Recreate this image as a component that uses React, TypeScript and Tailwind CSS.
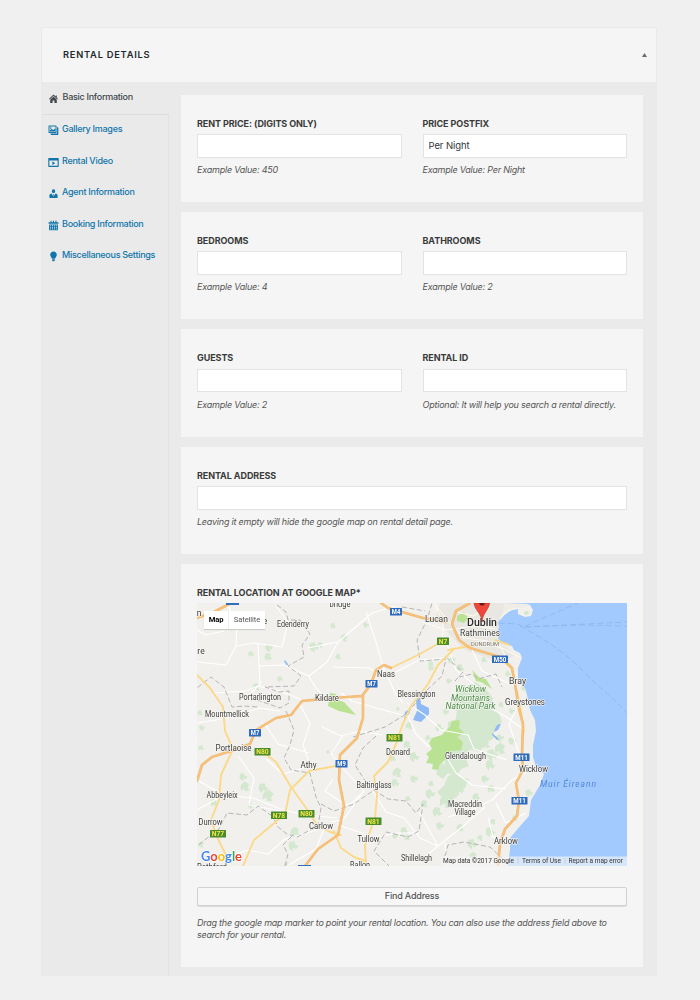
import React from "react";

const tabs = [
  { label: "Gallery Images", icon: "gallery" },
  { label: "Rental Video", icon: "video" },
  { label: "Agent Information", icon: "agent" },
  { label: "Booking Information", icon: "calendar" },
  { label: "Miscellaneous Settings", icon: "bulb" },
];

function Icon({ name }: { name: string }) {
  return (
    <svg viewBox="0 0 20 20" className="mt-[3px] h-[11px] w-[11px] shrink-0" fill="currentColor" fillRule="evenodd">
      {name === "home" && (
        <path d="M16 8.500l2 2-1.200 1.200L10 5 3.200 11.700 2 10.500 10 2.500l4 4v-2h2zM10 6.300l6 6V18h-4.300v-4.500H8.300V18H4v-5.700z" />
      )}
      {name === "gallery" && (
        <path d="M15.500 2v11.500c0 .55-.45 1-1 1H2c-.55 0-1-.45-1-1V2c0-.55.45-1 1-1h12.500c.55 0 1 .45 1 1zM13.700 2.800h-11v9.900h11zM5 7a1.500 1.500 0 1 0 0-3 1.500 1.500 0 0 0 0 3zM13 12V6.200L9.500 9 6.500 7.200 3.400 9.500V12zM16.500 4h1.300c.55 0 1 .45 1 1v12c0 .55-.45 1-1 1h-12c-.55 0-1-.45-1-1v-1.500h11.700z" />
      )}
      {name === "video" && (
        <path d="M1.500 2h17c.55 0 1 .45 1 1v14c0 .55-.45 1-1 1h-17c-.55 0-1-.45-1-1V3c0-.55.45-1 1-1zm1 4.500V16h15V6.500zM8 7.800l5 3.400-5 3.400z" />
      )}
      {name === "agent" && (
        <path d="M10 2.300a3.100 3.400 0 1 1 0 6.900 3.100 3.400 0 0 1 0-6.900zM6.500 10.200L10 16l-.9-3.800.9-1.200.9 1.200L10 16l3.500-5.800c2.300.5 4 1.700 4 3.300V17c0 .5-.4 1-1 1h-13c-.6 0-1-.5-1-1v-3.500c0-1.600 1.700-2.800 4-3.300z" />
      )}
      {name === "calendar" && (
        <path d="M4.500 1.500h2V4h2.500V1.500h2V4h2.500V1.500h2V4H19v3H1V4h3.500zM2 8h16v10.500H2zm2 1.500v1.800h1.700V9.500zm3.400 0v1.800h1.800V9.500zm3.500 0v1.800h1.700V9.500zm3.400 0v1.800h1.700V9.500zM4 12.500v1.800h1.700v-1.800zm3.400 0v1.800h1.800v-1.800zm3.500 0v1.800h1.700v-1.800zm3.400 0v1.800h1.700v-1.800zM4 15.500v1.800h1.700v-1.800zm3.400 0v1.800h1.800v-1.800zm3.500 0v1.800h1.700v-1.800zm3.400 0v1.800h1.700v-1.800z" />
      )}
      {name === "bulb" && (
        <path d="M10 1c3.300 0 6 2.700 6 6 0 2.800-2.200 4.600-3.300 7H7.300C6.200 11.600 4 9.800 4 7c0-3.300 2.700-6 6-6zM7.500 15h5v2l-1.200 1.500H8.700L7.500 17z" />
      )}
    </svg>
  );
}

function Label({ children }: { children: React.ReactNode }) {
  return <div className="h-[12px] text-[9px] leading-[12px] font-bold tracking-[-0.08px] whitespace-nowrap text-[#3a3a3a]">{children}</div>;
}

function Field({ label, value = "", hint }: { label: string; value?: string; hint: string }) {
  return (
    <div className="flex min-w-0 flex-1 flex-col">
      <Label>{label}</Label>
      <input
        defaultValue={value}
        aria-label={label}
        className="mt-[4.500px] h-[23.500px] w-full border border-[#e3e3e3] bg-white px-[5px] text-[9.500px] tracking-[-0.1px] text-[#32373c] outline-none"
      />
      <div className="mt-[6.500px] text-[9px] leading-[12px] tracking-[-0.22px] whitespace-nowrap text-[#555] italic">{hint}</div>
    </div>
  );
}

function Card({ children }: { children: React.ReactNode }) {
  return <section className="flex h-[107.400px] gap-[21px] bg-[#f5f5f5] px-4 pt-[23px]">{children}</section>;
}

type Town = [string, number, number, number];
const towns: Town[] = [
  ["Edenderry", 293, 627, 32],
  ["Portarlington", 260, 700, 42],
  ["Mountmellick", 227, 717, 44],
  ["Kildare", 327, 701, 24],
  ["Naas", 386, 676.5, 18],
  ["Lucan", 436.5, 622, 23],
  ["Rathmines", 480, 636, 40],
  ["Blessington", 416.5, 696.5, 38],
  ["Bray", 517.5, 684, 17],
  ["Greystones", 525, 705, 40],
  ["Portlaoise", 233.5, 751, 36],
  ["Athy", 308.5, 767.5, 16],
  ["Abbeyleix", 222, 797.5, 31],
  ["Durrow", 210.5, 825, 24],
  ["Carlow", 321, 829, 24],
  ["Donard", 398, 755, 24],
  ["Baltinglass", 374, 787.5, 35],
  ["Tullow", 368.5, 842, 22],
  ["Ballon", 360, 867.5, 20],
  ["Shillelagh", 416.5, 860.5, 31],
  ["Glendalough", 465.5, 759, 41],
  ["Macreddin", 465, 807, 34],
  ["Village", 465, 814.5, 21],
  ["Wicklow", 533.5, 771.5, 29],
  ["Arklow", 506, 843.5, 24],
];

type Shield = [string, number, number];
const shields: Shield[] = [
  ["M4", 396, 611.5], ["M7", 371.5, 683.5], ["M7", 255, 732.5], ["M9", 341.5, 763.5],
  ["M50", 500, 659], ["M11", 521.5, 757], ["M11", 519.5, 800.5],
  ["N7", 443, 641], ["N81", 394.5, 737.5], ["N80", 262.5, 751.5], ["N78", 279, 815],
  ["N80", 306.5, 813.5], ["N77", 218, 833.5], ["N81", 373.5, 821],
];

const greens: [number, number, number][] = [
  [269, 648, 4], [268, 657, 4], [314, 647, 5], [320, 645, 3], [251, 654, 3], [344, 638, 4], [333, 626, 3],
  [366, 625, 3], [338, 657, 3], [280, 679, 3], [256, 687, 4], [328, 752, 2], [202, 728, 3], [200, 713, 3],
  [243, 777, 4], [245, 787, 5], [263, 788, 5], [268, 796, 6], [214, 803, 4], [251, 806, 3], [295, 832, 5],
  [293, 846, 5], [201, 845, 3], [201, 748, 3], [287, 865, 3], [407, 745, 4], [414, 757, 5], [397, 773, 5],
  [395, 783, 4], [414, 779, 4], [431, 784, 3], [430, 794, 5], [424, 804, 4], [408, 799, 3], [447, 801, 8],
  [437, 812, 5], [440, 826, 4], [460, 828, 4], [472, 844, 5], [473, 856, 4], [404, 831, 4], [395, 836, 3],
  [407, 838, 3], [492, 755, 6], [500, 749, 6], [490, 765, 5], [512, 741, 4], [491, 789, 4], [529, 793, 4],
  [493, 822, 3], [490, 832, 5], [515, 818, 3], [488, 720, 4], [512, 711, 3], [501, 705, 3], [508, 674, 3],
  [452, 661, 4], [460, 668, 4], [449, 681, 3], [431, 664, 3], [431, 668, 3], [409, 726, 4], [439, 728, 4],
  [444, 742, 3], [476, 797, 4], [485, 779, 4], [417, 717, 3], [398, 709, 2], [434, 742, 3], [393, 759, 3],
  [446, 712, 3], [440, 762, 4], [459, 790, 5], [480, 838, 3], [484, 660, 3], [500, 738, 4], [486, 745, 4],
  [453, 795, 5], [443, 793, 4], [428, 738, 3], [524, 688, 3],
];

const majorRoads =
  "M197 618L214 612 231 603M197 781L202 765 212 757 234 750 250 744 256 730 276 718 291 715 302 701 333 698 362 696 371 684 376 670 384 665 391 668M363 696V718L357 738 340 755 339 780 344 806 338 835 318 849 305 866M381 603L388 608 423 618 446 622M470 603L456 611 452 624 459 640 470 648 500 657 512 668 516 690 519 709 523 724 522 755 523 770 516 783 519 801 517 816 505 829 500 844 498 866";

function MapView() {
  return (
    <svg viewBox="197 603 430 263" className="block h-[263px] w-[430px]" fontFamily="Roboto, 'Liberation Sans', sans-serif">
      <rect x="197" y="603" width="430" height="263" fill="#f2f0ed" />
      <path d="M440 603H506L500 622 499 642 516 655 500 662 465 650 447 632 436 615z" fill="#e5e2dc" opacity=".7" />
      <g fill="#cfe6c9" opacity=".85">
        {greens.map(([x, y, r], i) => (
          <path key={i} transform={`translate(${x} ${y}) rotate(${(i * 47) % 80}) scale(${r / 5})`} d="M-5-2L-1-5 2-2 5-3 4 2 1 1 2 5-2 4-4 2z" />
        ))}
        <path d="M454 700l3-9 10-5 8-4 10 6 8 10-2 6 8 9 3 9-7 6-2 11-8 4-5 9-9-2-5-8-6-4 4-9-9-6 2-12-5-4z" />
        <path d="M448 722l10-3 8 11 10 3-3 14-9 8 5 11-8 3-5 8-8-4-5 6-7-5 3-8 6-2-1-13 7-5-4-7zM448 776l7-3 5 4 9 2-4 9-9 4-4 7-9-1-6-6 7-6z" />
      </g>
      <path d="M432 738l10-3 3-4 5-4 2-6 8-1-1 8 5 5-7 4 6 5-2 8-8 1-7 2-1 7-5 4-2 6-6-1 1-5-7-1 3-6-3-3 6-5-3-6zM472 670l8 8 6 1 6 10-11-7-5-1zM457 616l7-4 4 6-4 5-7-2zM330 693l6 1-1 5 9 3 12 13-17-4-11-5z" fill="#b9e392" />
      <path d="M504 603H627V866H508L510 850V838L521 825 529 816 531 800 540 785 544 774 536 767 533 757V745L536 731 535 720 530 710 527 695 525 688 518 680V668L522 658 520 653 514 650 512 646 505 644 499 640 497 633 499 627 498 622 503 616 511 610 518 609 518 614 525 617 531 616 533 610 530 605 513 606z" fill="#a2caff" />
      <path d="M504 603L530 604 518 609 508 609 503 614z" fill="#efede6" />
      <path d="M500 619Q507 609 518 608" fill="none" stroke="#f6f3eb" strokeWidth="1.500" />
      <path d="M524 612l4-1 1 3-4 1z" fill="#cfe6c9" />
      <g fill="none" stroke="#8bb5ec" strokeWidth=".8" strokeDasharray="6 3">
        <path d="M499 623L517 624 525 627 627 622M525 626L578 603M520 626C548 641 568 655 584 672S613 697 627 713M525 627L580 625 627 626" />
      </g>
      <path d="M416 700l4-3 1 7 8 4 0 6-8 8-8-2 4-9zM405 712l6-4-2 6-5 5zM494 732q2-9 7-8l-3 6zM285 660l3 4-1 2-3-5zM492 733l7 6-2 1-5-5z" fill="#90baf5" />

      <g fill="none" stroke="#fff" strokeWidth="1.100" strokeLinejoin="round">
        <path d="M197 662L226 665 236 646 255 643 282 647 288 622 276 606M226 603L237 622 236 646M258 644L260 684 251 693M259 666L284 665 309 676 327 662 338 642 308 648M308 675L316 688 325 697M213 693L245 691 258 686 280 691 302 700M338 642L372 613 396 606M333 667L369 668 386 677M366 612L376 642 385 673M386 677L419 660 448 658M388 677L395 693 403 703M197 780L224 795 197 810M222 795L253 798 283 810 306 815 337 818M238 756L254 778 249 805 281 811M300 704L310 724 303 745 310 765M310 766L283 774 265 758M322 727L341 736 360 731 382 735M343 736L331 754 341 765M341 766L364 791 352 803 342 806M364 791L343 820 330 822M373 791L386 812 404 818 420 838 438 846 462 827 485 807M419 812L438 846 421 860M341 826L362 833 372 838 397 833 419 833M407 703L425 715 441 730 468 735 474 749 507 760M407 714L416 734 429 747M486 706L505 716 523 729M518 706L509 724 519 753M531 770L512 780 492 800 472 810 448 817M496 803L506 823 526 813M488 817L493 837 507 841M445 843L446 866M225 858L248 850 268 854 285 839 320 829M324 829L316 849 287 866M197 723L228 718 260 708 280 711M265 724L278 744 309 753M341 693L352 701 376 708 410 717M446 641L456 670 480 689M472 650L482 671 517 687M447 758L456 773 472 785 506 789M197 630L206 635 224 631M333 779L325 791 344 804" />
        <path d="M423 622L446 630 475 626 495 629M435 605L450 623 464 638 488 641M477 642L502 648 519 657M457 612L473 616 491 607M443 642L443 622 434 603M497 641L507 659 517 676" stroke="#fffaf0" />
      </g>
      <g fill="none" stroke="#b5b4b5" strokeWidth="1" strokeDasharray="5 2.500">
        <path d="M277 605L286 612 288 620 300 620 310 634 302 645 304 657 288 666 301 676 294 686 265 687 279 692 289 691 289 703 280 708 257 700M257 707L244 706 232 707 224 687 211 677 197 688M286 711L294 730 290 745 284 758 291 770 310 773 316 797 321 808 318 826 297 837 287 834 278 827 272 815M321 804L334 811 354 804 374 790 388 799 406 801 416 813 423 804 419 831 408 837 386 832 374 851 389 866M272 816L258 806 247 815 227 813 219 829 197 846M285 866L288 854 283 845 294 834M376 736L363 748 355 765 364 779 374 790M353 737L385 727 406 714 428 689 442 676 446 659 420 661 417 640 427 620 432 603M459 677L472 674 478 679 496 674 502 687M445 856L448 845 464 842 490 847 503 859M446 657L463 672 455 681M402 607L425 611" />
      </g>
      <g fill="none" strokeLinejoin="round" strokeLinecap="round">
        <path
          stroke="#fbd98a"
          strokeWidth="1.900"
          d="M197 675L210 688 223 707 225 731 233 749 221 775 219 800 211 820 217 837 226 855V866M264 753L276 762 291 787 309 812 317 825 330 832 341 835M309 771L290 790 285 814 272 825 254 840 243 866M309 771L341 765M391 668L418 655 443 641M448 650L475 645M453 650L438 665 428 684 411 706 402 726 396 744 388 762 374 776 377 796 375 818 365 845 366 866M334 831L341 848 354 857 365 861M495 640L509 645M517 691L521 712 524 732"
        />
        <path stroke="#eeb56b" strokeWidth="2.600" d={majorRoads} />
        <path stroke="#f8c27c" strokeWidth="1.600" d={majorRoads} />
      </g>
      <path d="M226 603h13v2h-13zM298 865h13v1h-13z" fill="#356dbe" />

      {shields.map(([t, x, y], i) => {
        const w = t.length === 2 ? 12 : 16;
        const m = t[0] === "M";
        return (
          <g key={i}>
            <rect x={x - w / 2} y={y - 3.5} width={w} height="7.500" rx=".5" fill={m ? "#2e6abd" : "#4a8b2c"} />
            <text x={x} y={y + 2.7} textAnchor="middle" fontSize="7.500" textLength={w - 3.5} lengthAdjust="spacingAndGlyphs" fontWeight="700" fill={m ? "#fff" : "#f0e84a"}>{t}</text>
          </g>
        );
      })}
      <g textAnchor="middle" stroke="#f7f6f3" strokeWidth="1.300" paintOrder="stroke" strokeLinejoin="round" fill="#3c3c3c">
        {towns.map(([t, x, y, w]) => (
          <text key={t} x={x} y={y} fontSize="8.500" textLength={w} lengthAdjust="spacingAndGlyphs">{t}</text>
        ))}
        <text x="340" y="607" fontSize="8.500" textLength="21" lengthAdjust="spacingAndGlyphs">bridge</text>
        <text x="201" y="654" fontSize="8.500">re</text>
        <text x="199" y="616" fontSize="8.500">n</text>
        <text x="265" y="624" fontSize="8.500">e</text>
        <text x="212" y="869.500" fontSize="8.500" textLength="30" lengthAdjust="spacingAndGlyphs">Rathford</text>
        <text x="485" y="646" fontSize="6.200" textLength="28" lengthAdjust="spacingAndGlyphs" fill="#77715f">DUNDRUM</text>
        <text x="482" y="626" fontSize="11.500" textLength="30" lengthAdjust="spacingAndGlyphs" fontWeight="500" fill="#2a2a2a">Dublin</text>
        <g fill="#498b43" fontStyle="italic" fontSize="8.500">
          <text x="470.500" y="692" textLength="31" lengthAdjust="spacingAndGlyphs">Wicklow</text>
          <text x="470.500" y="700.500" textLength="39" lengthAdjust="spacingAndGlyphs">Mountains</text>
          <text x="470.500" y="709" textLength="50" lengthAdjust="spacingAndGlyphs">National Park</text>
        </g>
      </g>
      <text x="540" y="787" fontSize="8.500" fontStyle="italic" fill="#5088d4" textLength="56">Muir Éireann</text>
      <path d="M474 603H489.500C489 610 482.500 613 482 622 481.500 613 474.500 610 474 603z" fill="#ef463b" stroke="#b82f28" strokeWidth=".6" />
      <path d="M479.400 603h5.200a2.600 2.600 0 0 1-5.200 0z" fill="#651a17" />

      <path d="M441 856.500H627V866H441z" fill="#f5f5f5" opacity=".65" />
      <path d="M518 858v6M565 858v6" stroke="#bcc4cf" strokeWidth=".6" />
      <g fontSize="7.600" fill="#333">
        <text x="443" y="863.300" textLength="71" lengthAdjust="spacingAndGlyphs">Map data ©2017 Google</text>
        <text x="522" y="863.300" textLength="39" lengthAdjust="spacingAndGlyphs">Terms of Use</text>
        <text x="568.500" y="863.300" textLength="54.500" lengthAdjust="spacingAndGlyphs">Report a map error</text>
      </g>
      <text x="201" y="861.300" fontFamily="Lato, sans-serif" fontSize="13.500" fontWeight="700" textLength="41" lengthAdjust="spacingAndGlyphs" stroke="#fff" strokeWidth="1.300" paintOrder="stroke">
        <tspan fill="#4285f4">G</tspan><tspan fill="#ea4335">o</tspan><tspan fill="#fbbc05">o</tspan><tspan fill="#4285f4">g</tspan><tspan fill="#34a853">l</tspan><tspan fill="#ea4335">e</tspan>
      </text>
    </svg>
  );
}

export default function App() {
  return (
    <div className="h-[1000px] w-[700px] overflow-hidden bg-[#f0f0f0] px-[41px] pt-[27px] font-['Inter',sans-serif]">
      <div className="flex h-[949px] w-[616px] flex-col border border-[#e9e9e9] border-b-0 bg-[#eaeaea]">
        <header className="flex h-[54px] shrink-0 items-center justify-between bg-[#f5f5f5] pr-[9px] pl-[21px]">
          <h1 className="text-[9.300px] font-semibold tracking-[0.760px] text-[#23282d]">RENTAL DETAILS</h1>
          <svg viewBox="0 0 5 4" className="h-[4px] w-[5px]"><path d="M2.500 0L5 4H0z" fill="#666c72" /></svg>
        </header>
        <div className="flex min-h-0 flex-1">
          <nav className="flex w-[127px] shrink-0 flex-col text-[9px] font-medium tracking-[-0.28px] text-[#0f75aa]">
            <div className="flex h-[33px] items-start gap-[3.500px] border-b border-[#dedede] pt-[8px] pl-[6px] leading-[13px] text-[#40464b]">
              <Icon name="home" />
              Basic Information
            </div>
            <div className="flex flex-1 flex-col border-r border-[#e2e2e2]">
              {tabs.map((t) => (
                <a key={t.label} className="flex h-[31.500px] shrink-0 items-start gap-[3px] pt-[7px] pl-[6px] leading-[13px] whitespace-nowrap">
                  <Icon name={t.icon} />
                  {t.label}
                </a>
              ))}
            </div>
          </nav>
          <main className="flex min-w-0 flex-1 flex-col gap-[10px] pt-[12.500px] pr-[13px] pl-[12px]">
            <Card>
              <Field label="RENT PRICE: (DIGITS ONLY)" hint="Example Value: 450" />
              <Field label="PRICE POSTFIX" value="Per Night" hint="Example Value: Per Night" />
            </Card>
            <Card>
              <Field label="BEDROOMS" hint="Example Value: 4" />
              <Field label="BATHROOMS" hint="Example Value: 2" />
            </Card>
            <Card>
              <Field label="GUESTS" hint="Example Value: 2" />
              <Field label="RENTAL ID" hint="Optional: It will help you search a rental directly." />
            </Card>
            <Card>
              <Field label="RENTAL ADDRESS" hint="Leaving it empty will hide the google map on rental detail page." />
            </Card>
            <section className="flex h-[403px] shrink-0 flex-col bg-[#f5f5f5] px-4 pt-[22.500px]">
              <Label>RENTAL LOCATION AT GOOGLE MAP*</Label>
              <div className="relative mt-[4px] h-[263px] shrink-0 overflow-hidden">
                <MapView />
                <div className="absolute top-[8px] left-[7px] flex h-[18px] w-[61px] items-center bg-white font-['Roboto',sans-serif] text-[7.600px] tracking-[-0.1px] text-[#565656] shadow-[0_1px_1px_rgba(0,0,0,0.15)]">
                  <span className="flex h-full w-[25px] items-center justify-center border-r border-[#eee] font-bold text-black">Map</span>
                  <span className="flex-1 text-center">Satellite</span>
                </div>
              </div>
              <button className="mt-[21px] h-[19px] w-full shrink-0 rounded-[2px] border border-[#d2d2d2] bg-[#f7f7f7] text-[9px] font-medium tracking-[-0.2px] text-[#555] shadow-[0_1px_0_#dcdcdc]">Find Address</button>
              <p className="mt-[11px] text-[9px] leading-[12.500px] tracking-[-0.24px] whitespace-nowrap text-[#555] italic">
                Drag the google map marker to point your rental location. You can also use the address field above to
                <br />
                search for your rental.
              </p>
            </section>
          </main>
        </div>
      </div>
    </div>
  );
}
